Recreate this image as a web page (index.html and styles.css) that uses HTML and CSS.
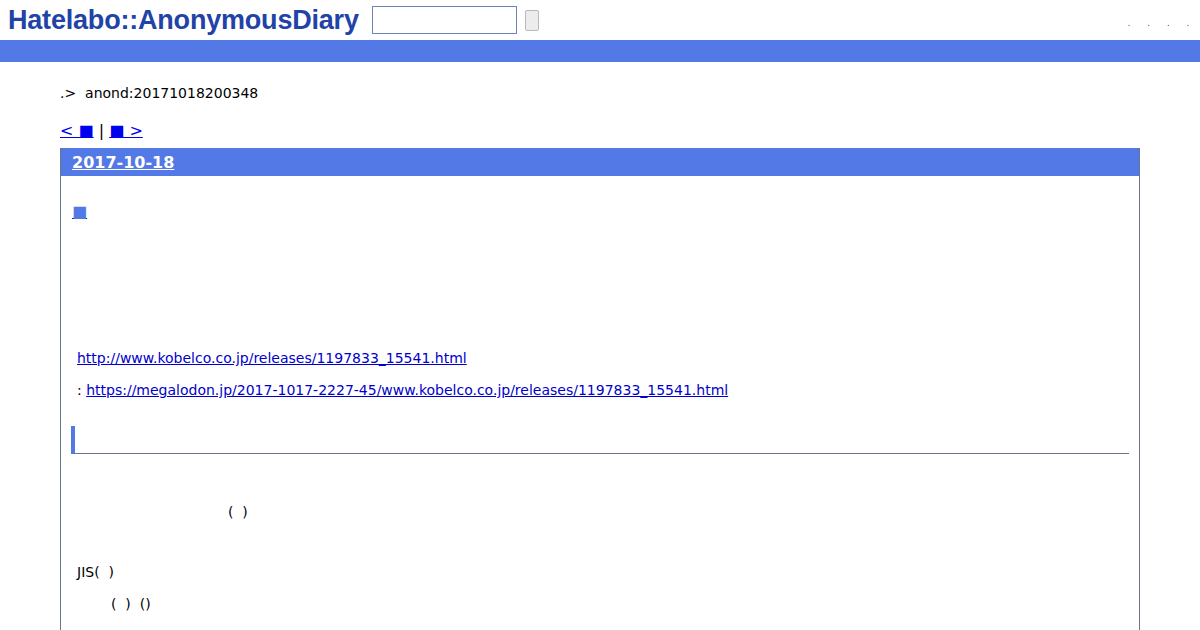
FILE: index.html
```html
<!DOCTYPE html>
<html lang="ja">
<head>
  <meta charset="UTF-8">
  <title>anond:20171018200348</title>
  <link rel="stylesheet" href="styles.css">
</head>
<body>
  <div id="bannerheader">
    <a class="logo" href="#">Hatelabo::AnonymousDiary</a>
    <form class="search">
      <input type="text" name="word">
      <button type="submit"></button>
    </form>
    <ul class="menu">
      <li>.</li>
      <li>.</li>
      <li>.</li>
      <li>.</li>
    </ul>
  </div>
  <div id="bar"></div>

  <div id="body">
    <div class="breadcrumb">.&gt;&nbsp; anond:20171018200348</div>
    <div class="pager"><a href="#">&lt; ■</a> | <a href="#">■ &gt;</a></div>

    <div class="day">
      <h2><a href="#">2017-10-18</a></h2>
      <div class="section">
        <h3><a href="#">■</a></h3>
        <p class="blank">&nbsp;</p>
        <p class="blank">&nbsp;</p>
        <p class="blank">&nbsp;</p>
        <p class="blank">&nbsp;</p>
        <p><a href="#">http://www.kobelco.co.jp/releases/1197833_15541.html</a></p>
        <p>: <a href="#">https://megalodon.jp/2017-1017-2227-45/www.kobelco.co.jp/releases/1197833_15541.html</a></p>
        <h4>&nbsp;</h4>
        <p class="blank">&nbsp;</p>
        <p class="indent-wide">(&nbsp;&nbsp;)</p>
        <p class="blank short">&nbsp;</p>
        <p>JIS(&nbsp;&nbsp;)</p>
        <p class="indent">(&nbsp;&nbsp;)&nbsp;&nbsp;()</p>
        <p class="blank">&nbsp;</p>
        <p class="blank">&nbsp;</p>
        <p class="blank">&nbsp;</p>
      </div>
    </div>
  </div>
</body>
</html>
```

FILE: styles.css
```css
body {
  margin: 0;
  font-family: "DejaVu Sans", sans-serif;
  font-size: 14px;
  color: #000;
  background: #fff;
}
a {
  color: #0000cc;
}
#bannerheader {
  height: 40px;
  display: flex;
  align-items: center;
  padding: 0 11px 0 8px;
}
.logo {
  font-family: "Liberation Sans", sans-serif;
  font-weight: bold;
  font-size: 27px;
  color: #2143a8;
  text-decoration: none;
  letter-spacing: -0.2px;
  width: 350px;
  white-space: nowrap;
}
.search {
  display: flex;
  align-items: center;
  margin: 0 0 0 14px;
}
.search input {
  width: 143px;
  height: 26px;
  padding: 0;
  margin: 0;
  border: 1px solid #6d82b6;
}
.search button {
  width: 14px;
  height: 21px;
  margin-left: 8px;
  padding: 0;
  border: 1px solid #b9b9b9;
  background: #ececec;
  border-radius: 2px;
}
.menu {
  list-style: none;
  margin: 6px 0 0 auto;
  padding: 0;
  display: flex;
  gap: 17px;
  font-size: 8px;
  color: #333;
}
#bar {
  height: 22px;
  background: #5279e6;
}
#body {
  padding: 22px 60px 0;
}
.breadcrumb {
  line-height: 18px;
}
.pager {
  font-size: 16px;
  line-height: 19px;
  margin-top: 19px;
}
.pager a {
  color: #0000ee;
}
.day {
  margin-top: 8px;
  border: 1px solid #6b7592;
  border-top: none;
}
.day h2 {
  margin: 0;
  background: #5279e6;
  font-size: 16px;
  line-height: 27px;
  padding: 1px 0 0 11px;
}
.day h2 a {
  color: #fff;
}
.section {
  padding: 0 10px 0 10px;
}
.section h3 {
  margin: 25px 0 0;
  padding-left: 1px;
  font-size: 16px;
  line-height: 22px;
}
.section h3 a {
  color: #5279e6;
  text-decoration-color: #1a2a66;
}
.section p {
  margin: 14px 0 0;
  padding-left: 6px;
  line-height: 18px;
}
.section p.blank {
  margin-top: 10px;
}
.section h4 {
  margin: 27px 0 0;
  border-left: 4px solid #5279e6;
  border-bottom: 1px solid #6b7592;
  height: 27px;
  font-size: 14px;
}
.section h4 + p.blank {
  margin-top: 17px;
}
.section p.indent-wide {
  padding-left: 157px;
}
.section p.indent {
  padding-left: 40px;
}
.section p.short {
  margin-top: 10px;
}
```
